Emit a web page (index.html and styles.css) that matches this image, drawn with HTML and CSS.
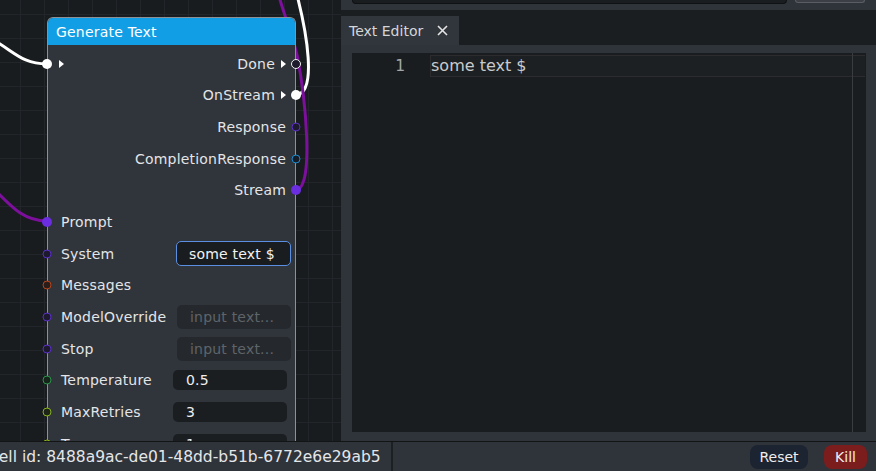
FILE: index.html
```html
<!DOCTYPE html>
<html>
<head>
<meta charset="utf-8">
<link rel="stylesheet" href="styles.css">
</head>
<body>
<div class="app">
  <div class="main">
    <div class="canvas">
      <svg class="wires" width="341" height="441" viewBox="0 0 341 441">
        <path d="M-10,38 C15,52 22,64 47,64" class="w-white"/>
        <path d="M296,95 C318,93 306,30 297,-5" class="w-white"/>
        <path d="M-10,185 C10,205 22,221 47,221" class="w-purple"/>
        <path d="M296,190 C315,188 305,95 297,55 C291,30 283,12 279,-4" class="w-purple"/>
      </svg>
      <div class="node">
        <div class="node-header">Generate Text</div>
        <div class="node-body">
          <div class="row">
            <span class="pin pin-l fill-white"></span>
            <span class="tri tri-in"></span>
            <span class="lbl-r">Done</span><span class="tri tri-out"></span>
            <span class="pin pin-r ring-white"></span>
          </div>
          <div class="row">
            <span class="lbl-r">OnStream</span><span class="tri tri-out"></span>
            <span class="pin pin-r fill-white"></span>
          </div>
          <div class="row">
            <span class="lbl-r">Response</span>
            <span class="pin pin-r ring-purple"></span>
          </div>
          <div class="row">
            <span class="lbl-r">CompletionResponse</span>
            <span class="pin pin-r ring-blue"></span>
          </div>
          <div class="row">
            <span class="lbl-r">Stream</span>
            <span class="pin pin-r fill-purple"></span>
          </div>
          <div class="row">
            <span class="pin pin-l fill-purple"></span>
            <span class="lbl-l">Prompt</span>
          </div>
          <div class="row row-in">
            <span class="pin pin-l ring-purple"></span>
            <span class="lbl-l">System</span>
            <span class="field field-focus">some text $</span>
          </div>
          <div class="row">
            <span class="pin pin-l ring-orange"></span>
            <span class="lbl-l">Messages</span>
          </div>
          <div class="row row-in">
            <span class="pin pin-l ring-purple"></span>
            <span class="lbl-l">ModelOverride</span>
            <span class="field field-ph">input text...</span>
          </div>
          <div class="row row-in">
            <span class="pin pin-l ring-purple"></span>
            <span class="lbl-l">Stop</span>
            <span class="field field-ph">input text...</span>
          </div>
          <div class="row row-num">
            <span class="pin pin-l ring-green"></span>
            <span class="lbl-l">Temperature</span>
            <span class="field field-num">0.5</span>
          </div>
          <div class="row row-num">
            <span class="pin pin-l ring-lime"></span>
            <span class="lbl-l">MaxRetries</span>
            <span class="field field-num">3</span>
          </div>
          <div class="row row-num">
            <span class="pin pin-l ring-lime"></span>
            <span class="lbl-l">Top_p</span>
            <span class="field field-num">1</span>
          </div>
        </div>
      </div>
    </div>
    <div class="panel">
      <div class="topbar">
        <div class="top-input"></div>
        <div class="top-btn"></div>
      </div>
      <div class="tabbar">
        <div class="tab">
          <span class="tab-title">Text Editor</span>
          <svg class="tab-close" width="11" height="11" viewBox="0 0 11 11"><path d="M1,1 L10,10 M10,1 L1,10"/></svg>
        </div>
      </div>
      <div class="editor">
        <div class="gutter"><span class="ln">1</span></div>
        <div class="code">
          <div class="line active">some text $</div>
        </div>
        <div class="print-margin"></div>
      </div>
    </div>
  </div>
  <div class="status">
    <div class="cell-id">Cell id: 8488a9ac-de01-48dd-b51b-6772e6e29ab5</div>
    <div class="spacer"></div>
    <button class="btn btn-reset">Reset</button>
    <button class="btn btn-kill">Kill</button>
  </div>
</div>
</body>
</html>
```

FILE: styles.css
```css
* { box-sizing: border-box; }
html, body {
  margin: 0;
  padding: 0;
  width: 876px;
  height: 471px;
  overflow: hidden;
  background: #191c1e;
  font-family: "DejaVu Sans", "Noto Sans", sans-serif;
}
.app {
  display: flex;
  flex-direction: column;
  height: 471px;
}
.main {
  display: flex;
  height: 441px;
}

/* ---------- canvas ---------- */
.canvas {
  width: 341px;
  flex: none;
  position: relative;
  overflow: hidden;
  background-color: #191c1e;
  background-image:
    linear-gradient(#22262a 1px, transparent 1px),
    linear-gradient(90deg, #22262a 1px, transparent 1px);
  background-size: 24px 24px;
  background-position: 20px 14px;
}
.wires {
  position: absolute;
  left: 0;
  top: 0;
}
.wires path {
  fill: none;
  stroke-width: 3;
  stroke-linecap: round;
}
.w-white { stroke: #ffffff; }
.w-purple { stroke: #7c0f9c; }

.node {
  position: absolute;
  left: 47px;
  top: 17px;
  width: 249px;
  height: 424px;
  overflow: visible;
  border: 1px solid #8d9196;
  border-bottom: none;
  border-radius: 6px 6px 0 0;
  background: #30343b;
}
.node-header {
  height: 27px;
  background: #129ee4;
  border-radius: 5px 5px 0 0;
  color: #ffffff;
  font-size: 14px;
  letter-spacing: 0.2px;
  padding-left: 8px;
  display: flex;
  align-items: center;
}
.node-body {
  padding-top: 3px;
}
.row {
  position: relative;
  height: 31.65px;
  display: flex;
  align-items: center;
  padding: 0 9px 0 13px;
  font-size: 14px;
  letter-spacing: 0.2px;
  color: #e3e5e7;
}
.row-in { padding-right: 4px; }
.row-num { padding-right: 8px; }
.lbl-r { margin-left: auto; }

.tri {
  width: 0;
  height: 0;
  border-top: 4.5px solid transparent;
  border-bottom: 4.5px solid transparent;
  border-left: 5.5px solid #ffffff;
}
.tri-in { position: absolute; left: 11px; top: 11.5px; }
.tri-out { margin-left: 6px; }

.pin {
  position: absolute;
  top: 50%;
  width: 9px;
  height: 9px;
  border-radius: 50%;
}
.pin-l { left: -1px; transform: translate(-50%, -50%); }
.pin-r { right: -1px; transform: translate(50%, -50%); }
.fill-white { background: #ffffff; width: 10px; height: 10px; }
.fill-purple { background: #6a2ee0; width: 10px; height: 10px; }
.ring-white { background: #1d1b2c; border: 1.5px solid #f2f2f2; width: 10px; height: 10px; }
.ring-purple { background: #1d1a2e; border: 1.5px solid #5a2ec8; }
.ring-blue { background: #161c26; border: 1.5px solid #1b8bd0; }
.ring-orange { background: #2a1d1a; border: 1.5px solid #b5441c; }
.ring-green { background: #17241c; border: 1.5px solid #2a9347; }
.ring-lime { background: #1f2418; border: 1.5px solid #86b21c; }

.field {
  margin-left: auto;
  display: flex;
  align-items: center;
  border-radius: 5px;
  font-size: 14px;
  letter-spacing: 0.2px;
  white-space: nowrap;
}
.field-focus {
  width: 115px;
  height: 25px;
  background: #1a1d20;
  border: 1.5px solid #5b8fe2;
  color: #f2f2f2;
  padding-left: 12px;
}
.field-ph {
  width: 114px;
  height: 24px;
  background: #25292e;
  color: #5f6469;
  padding-left: 13px;
}
.field-num {
  width: 114px;
  height: 20px;
  background: #1b1e21;
  color: #eeeeee;
  padding-left: 13px;
}

/* ---------- right panel ---------- */
.panel {
  flex: 1;
  background: #2f333a;
  display: flex;
  flex-direction: column;
  padding: 0 10px 9px 11px;
}
.topbar {
  height: 10px;
  flex: none;
  display: flex;
  gap: 8px;
  align-items: flex-start;
}
.top-input {
  flex: 1;
  height: 4px;
  background: #1a1d1f;
  border: 1px solid #0f1113;
  border-top: none;
  border-radius: 0 0 4px 4px;
}
.top-btn {
  width: 70px;
  height: 3px;
  margin-right: 1px;
  background: #3c4046;
  border: 1px solid #5a5e63;
  border-top: none;
  border-radius: 0 0 4px 4px;
}
.tabbar {
  height: 35px;
  flex: none;
  margin: 0 -10px 0 -11px;
  background: #1b1e20;
  display: flex;
  align-items: flex-end;
}
.tab {
  width: 118px;
  height: 29px;
  background: #31353c;
  display: flex;
  align-items: center;
  padding-left: 8px;
}
.tab-title {
  font-size: 14px;
  color: #d4d6d8;
}
.tab-close {
  margin-left: auto;
  margin-right: 11px;
}
.tab-close path {
  stroke: #e4e4e4;
  stroke-width: 1.6;
  fill: none;
}
.editor {
  margin-top: 8px;
  flex: 1;
  background: #1a1d1f;
  display: flex;
  position: relative;
}
.gutter {
  width: 78px;
  flex: none;
  text-align: right;
  padding-right: 25px;
  padding-top: 2px;
}
.ln {
  display: block;
  height: 22px;
  line-height: 22px;
  font-size: 15.5px;
  color: #a3a6a8;
}
.code {
  flex: 1;
  padding-top: 2px;
}
.line {
  height: 22px;
  line-height: 20px;
  font-size: 16px;
  color: #c9cbcc;
  white-space: pre;
}
.line.active {
  background: #1d2022;
  border-top: 1px solid #2c2c2f;
  border-bottom: 1px solid #2c2c2f;
  border-left: 1px solid #2c2c2f;
  margin-right: 1px;
}
.print-margin {
  position: absolute;
  left: 500px;
  top: 0;
  bottom: 0;
  width: 1px;
  background: #3a3d40;
}

/* ---------- status bar ---------- */
.status {
  height: 30px;
  flex: none;
  background: #2f333a;
  border-top: 1px solid #121416;
  display: flex;
  align-items: center;
  padding-right: 9px;
}
.cell-id {
  margin-left: -12px;
  height: 100%;
  display: flex;
  align-items: center;
  padding-right: 10px;
  border-right: 2px solid #1d2022;
  font-size: 15.5px;
  color: #e4e6e8;
  white-space: nowrap;
}
.spacer { flex: 1; }
.btn {
  height: 24px;
  border: none;
  border-radius: 8px;
  color: #eeeeee;
  font-family: inherit;
  font-size: 14px;
  padding: 0;
}
.btn-reset {
  width: 58px;
  background: #1c2331;
  margin-right: 16px;
}
.btn-kill {
  width: 43px;
  background: #7b1d1d;
}
```
